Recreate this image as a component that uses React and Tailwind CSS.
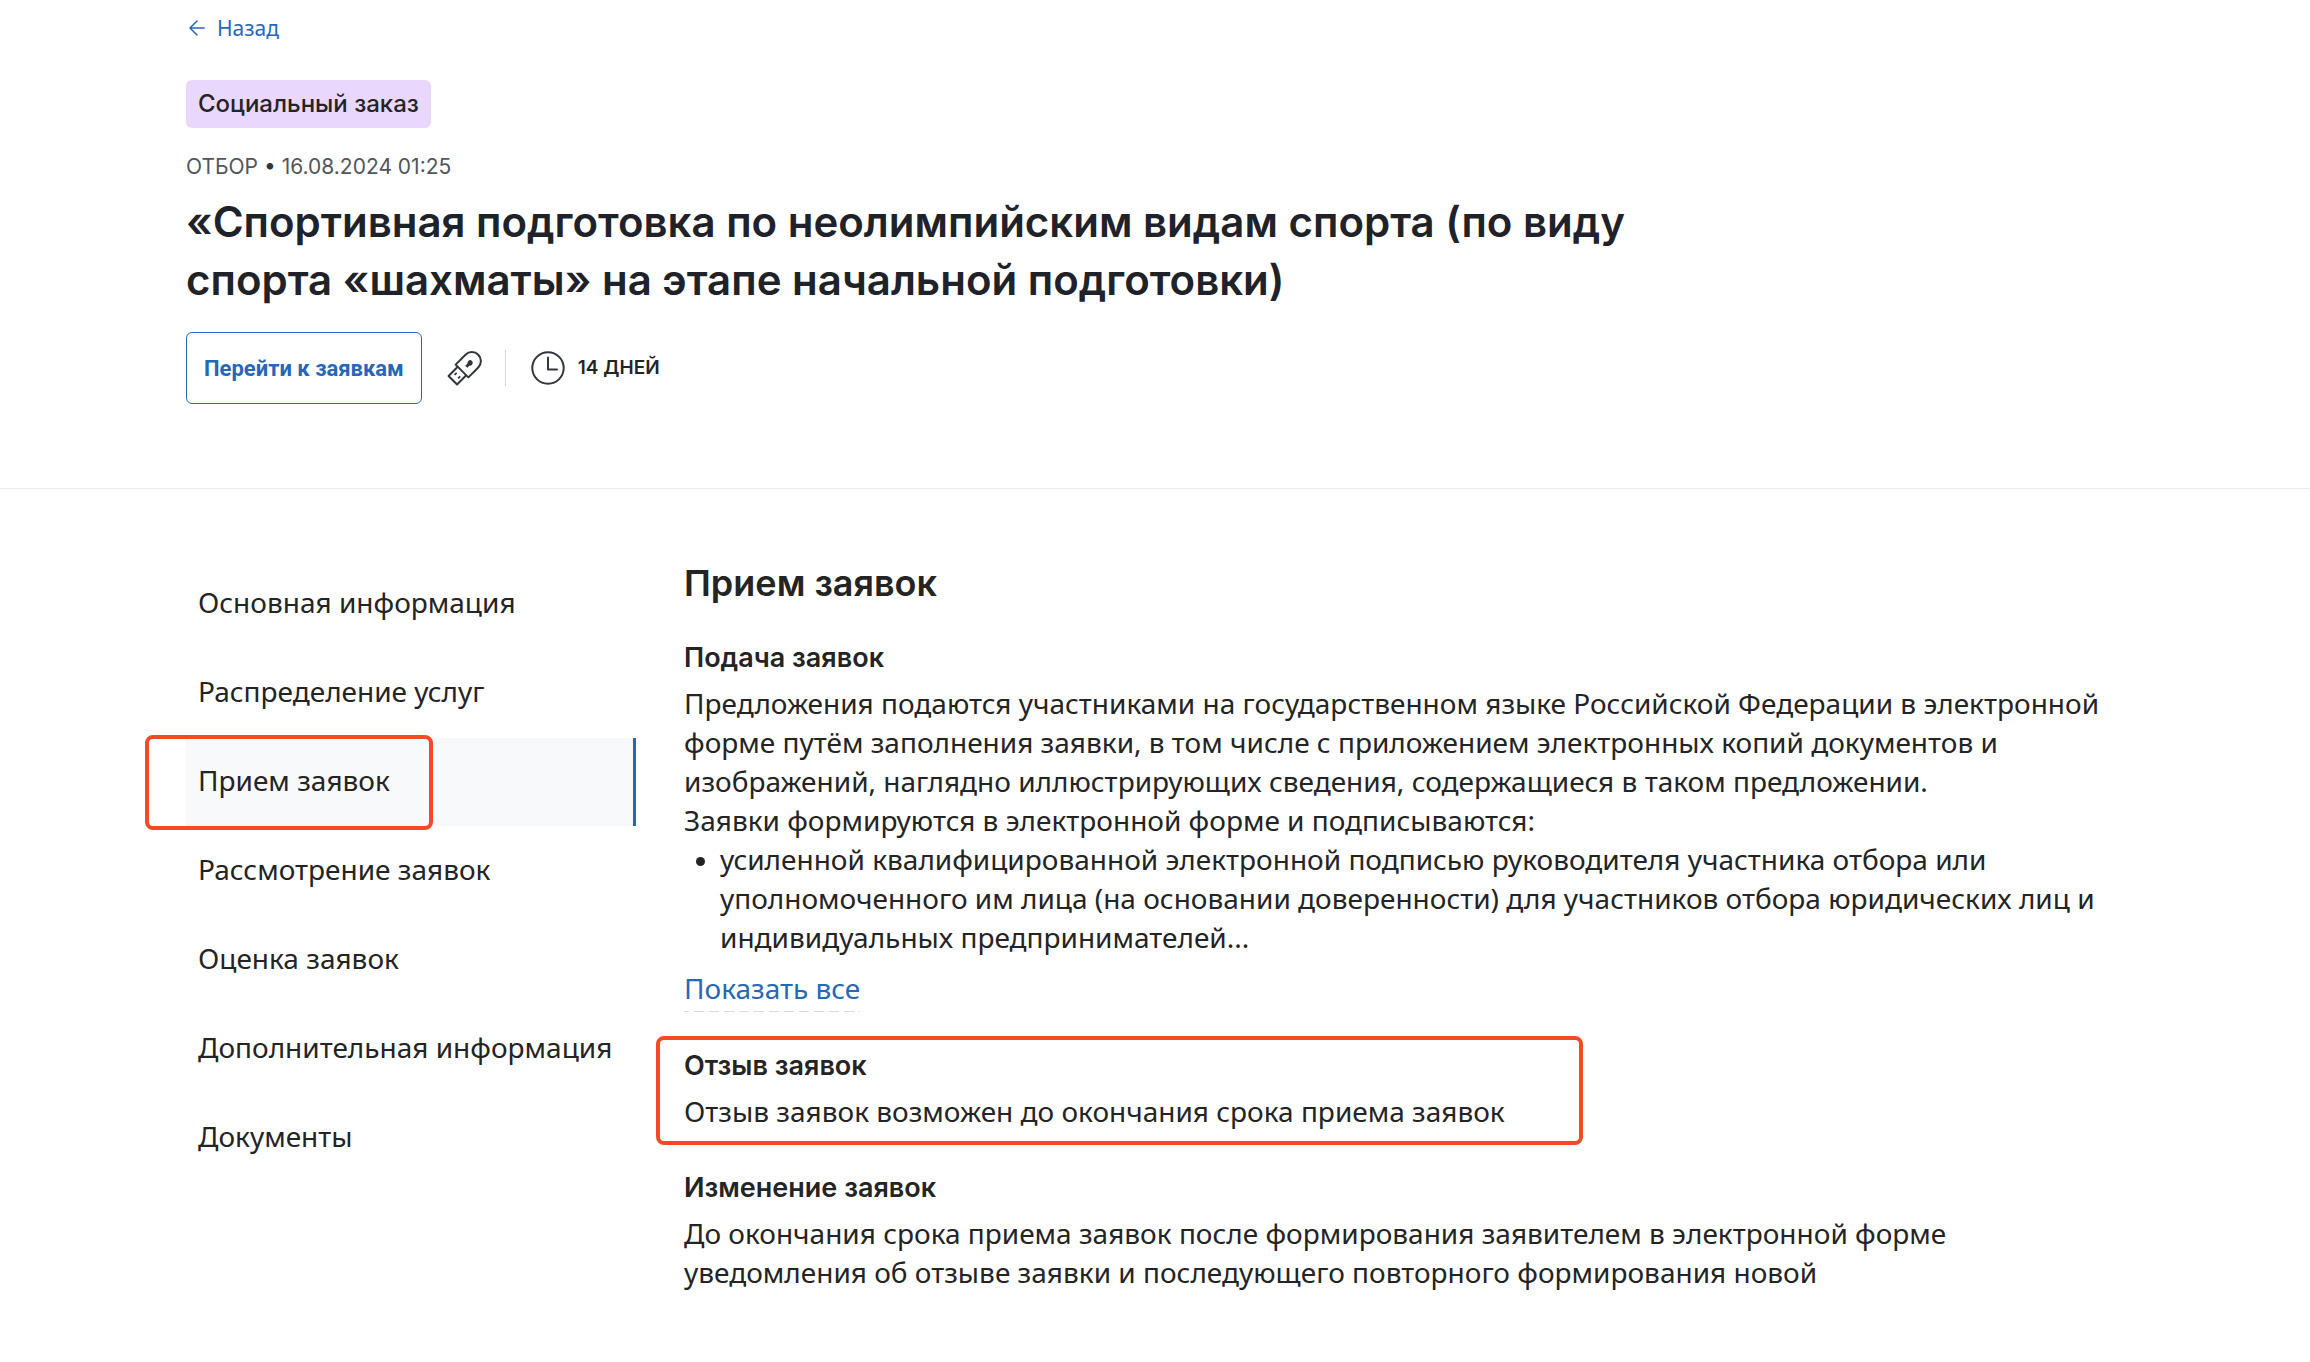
import React from "react";

const navItems = [
  "Основная информация",
  "Распределение услуг",
  "Прием заявок",
  "Рассмотрение заявок",
  "Оценка заявок",
  "Дополнительная информация",
  "Документы",
];
const activeItem = "Прием заявок";

function BackArrow() {
  return (
    <svg className="h-4 w-4" viewBox="0 0 16 16" fill="none" stroke="currentColor" strokeWidth="1.5" strokeLinecap="round" strokeLinejoin="round" aria-hidden="true">
      <path d="M15.2 8H1M8 1 1 8l7 7" />
    </svg>
  );
}

function UsbKey() {
  return (
    <svg className="h-9 w-9" viewBox="0 0 36 36" fill="none" stroke="#32363d" strokeWidth="2" strokeLinejoin="round" aria-hidden="true">
      <g transform="translate(16 21) rotate(45)">
        <path d="M-9 0V-14a9 9 0 0 1 18 0V0Z" />
        <path d="M-6 0V13H6V0" />
        <path d="M-2.5 5v3M2.5 5v3" strokeWidth="1.8" />
        <circle cx="0" cy="-11.5" r="1.6" fill="#32363d" />
        <path d="M0-11v5" strokeWidth="3" />
      </g>
    </svg>
  );
}

function Clock() {
  return (
    <svg className="h-9 w-9" viewBox="0 0 36 36" fill="none" stroke="#32363d" strokeWidth="2" strokeLinecap="round" strokeLinejoin="round" aria-hidden="true">
      <circle cx="18" cy="18" r="15.7" />
      <path d="M18 7.5v12h9" />
    </svg>
  );
}

function Highlight({ className }) {
  return <div aria-hidden="true" className={`pointer-events-none absolute rounded-lg border-4 border-[#f64a27] ${className}`} />;
}

function Section({ title, children }) {
  return (
    <section>
      <h3 className="font-['Inter',sans-serif] text-[27px] leading-9 font-semibold">{title}</h3>
      <div className="mt-2">{children}</div>
    </section>
  );
}

export default function App() {
  return (
    <div className="min-h-screen bg-white font-['Noto_Sans',sans-serif] text-[#242424]">
      <header className="border-b-1 border-[#ebebeb] px-[186px] pt-[14px] pb-[84px]">
        <a href="#back" className="inline-flex items-center gap-3 pl-[3px] align-top text-[21px] leading-7 text-[#2767b8]">
          <BackArrow />
          Назад
        </a>
        <div className="mt-[38px] flex">
          <span className="rounded-md bg-[#ead7fe] px-3 font-['Inter',sans-serif] text-2xl leading-[48px] font-medium">Социальный заказ</span>
        </div>
        <p className="mt-[25px] font-['Inter',sans-serif] text-[21px] leading-7 text-[#52565c]">
          ОТБОР <span className="text-[#32363d]">•</span> 16.08.2024 01:25
        </p>
        <h1 className="mt-3 max-w-[1500px] font-['Inter',sans-serif] text-[42px] leading-[58px] font-semibold text-[#1f2329]">
          «Спортивная подготовка по неолимпийским видам спорта (по виду спорта «шахматы» на этапе начальной подготовки)
        </h1>
        <div className="mt-[23px] flex items-center">
          <button type="button" className="h-[72px] rounded-md border-1 border-[#2767b8] px-[17px] font-['Roboto',sans-serif] text-[22px] font-bold text-[#2767b8]">
            Перейти к заявкам
          </button>
          <div className="ml-6 flex items-center">
            <UsbKey />
            <div className="ml-[23px] h-9 w-px bg-[#d5d8de]" />
            <div className="ml-6 flex items-center gap-3 font-['Inter',sans-serif] text-[19px] font-semibold">
              <Clock />
              14 ДНЕЙ
            </div>
          </div>
        </div>
      </header>

      <div className="flex items-start gap-12 px-[186px] pt-[71px] pb-[72px]">
        <nav className="flex w-[450px] shrink-0 flex-col gap-px text-[28px]">
          {navItems.map((item) => (
            <div key={item} className="relative">
              <a
                href="#section"
                aria-current={item === activeItem ? "page" : undefined}
                className={
                  item === activeItem
                    ? "flex h-[88px] items-center border-r-3 border-[#2767b8] bg-[#f8f9fb] pb-1 pl-3 whitespace-nowrap"
                    : "flex h-[88px] items-center pb-1 pl-3 whitespace-nowrap"
                }
              >
                {item}
              </a>
              {item === activeItem && <Highlight className="-top-[3px] -left-[41px] h-[95px] w-[288px]" />}
            </div>
          ))}
        </nav>

        <main className="min-w-0 flex-1 text-[28px] leading-[39px]">
          <h2 className="mb-[34px] font-['Inter',sans-serif] text-4xl leading-[46px] font-semibold">Прием заявок</h2>
          <Section title="Подача заявок">
            <p>
              Предложения подаются участниками на государственном языке Российской Федерации в электронной форме путём
              заполнения заявки, в том числе с приложением электронных копий документов и изображений, наглядно
              иллюстрирующих сведения, содержащиеся в таком предложении.
            </p>
            <p>Заявки формируются в электронной форме и подписываются:</p>
            <ul className="list-disc pl-9 marker:text-2xl">
              <li>
                усиленной квалифицированной электронной подписью руководителя участника отбора или уполномоченного им
                лица (на основании доверенности) для участников отбора юридических лиц и индивидуальных
                предпринимателей...
              </li>
            </ul>
            <button type="button" className="mt-3 block text-[#2767b8]">
              Показать все
              <span className="mt-[3px] block h-px bg-[repeating-linear-gradient(90deg,#d8dade_0_5px,transparent_5px_10px,#d8dade_10px_15px)]" />
            </button>
          </Section>
          <div className="relative mt-9 mb-[39px]">
            <Section title="Отзыв заявок">
              <p>Отзыв заявок возможен до окончания срока приема заявок</p>
            </Section>
            <Highlight className="-top-3 -left-7 h-[109px] w-[927px]" />
          </div>
          <Section title="Изменение заявок">
            <p className="max-w-[1400px]">
              До окончания срока приема заявок после формирования заявителем в электронной форме уведомления об отзыве
              заявки и последующего повторного формирования новой
            </p>
          </Section>
        </main>
      </div>
    </div>
  );
}
